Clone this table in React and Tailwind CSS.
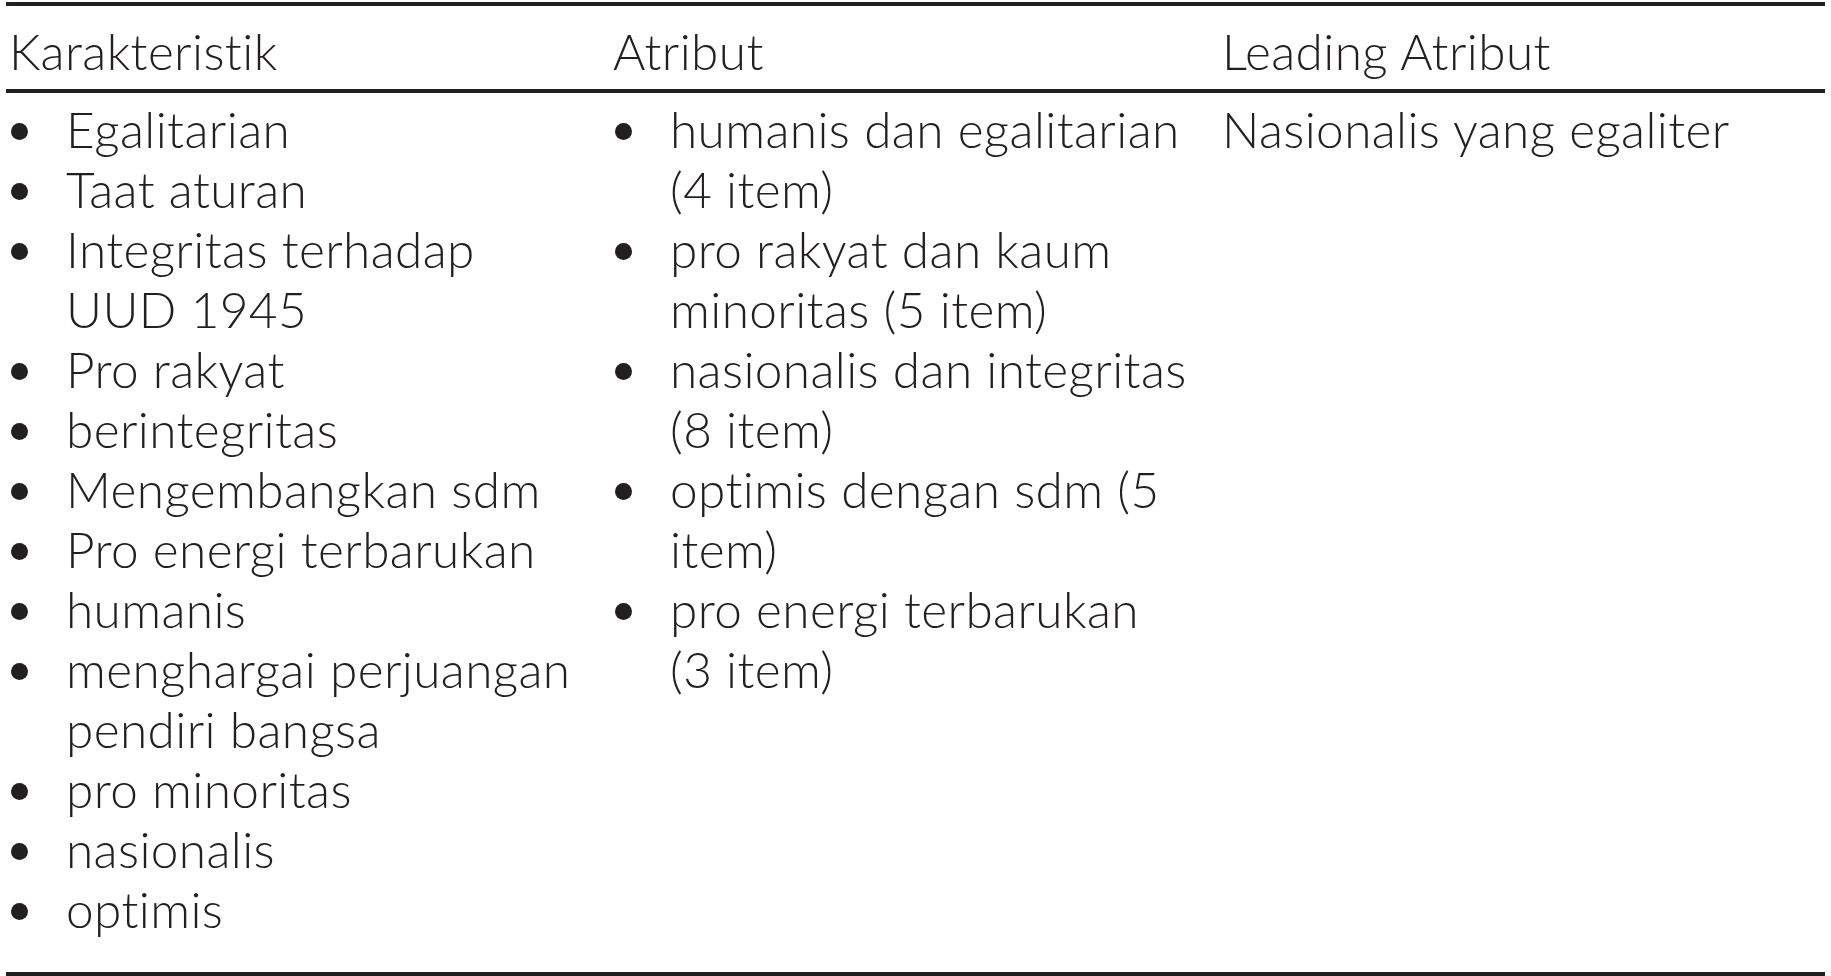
const col1 = [
  ['Egalitarian'],
  ['Taat aturan'],
  ['Integritas terhadap', 'UUD 1945'],
  ['Pro rakyat'],
  ['berintegritas'],
  ['Mengembangkan sdm'],
  ['Pro energi terbarukan'],
  ['humanis'],
  ['menghargai perjuangan', 'pendiri bangsa'],
  ['pro minoritas'],
  ['nasionalis'],
  ['optimis'],
]

const col2 = [
  ['humanis dan egalitarian', '(4 item)'],
  ['pro rakyat dan kaum', 'minoritas (5 item)'],
  ['nasionalis dan integritas', '(8 item)'],
  ['optimis dengan sdm (5', 'item)'],
  ['pro energi terbarukan', '(3 item)'],
]

function Bullets({ items }) {
  return (
    <ul>
      {items.map((lines, i) => (
        <li key={i} className="flex">
          <span className="w-[57px] shrink-0 pl-[2px] pt-[24px]">
            <span className="block w-[17px] h-[17px] rounded-full bg-[#231f20]" />
          </span>
          <span>
            {lines.map((l, j) => (
              <span key={j} className="block whitespace-nowrap">{l}</span>
            ))}
          </span>
        </li>
      ))}
    </ul>
  )
}

export default function App() {
  return (
    <div className="w-[1831px] h-[976px] bg-white pt-[2px] px-[6px] text-[#231f20] text-[49.5px] leading-[60px] tracking-[0.4px] [font-variant-ligatures:none] font-light font-['Lato',sans-serif]">
      <div className="border-t-4 border-b-4 border-[#231f20]">
        {/* Header */}
        <div className="grid grid-cols-[604px_609px_1fr] pt-[15px] pb-[8px] pl-[3px] border-b-4 border-[#231f20]">
          <div>Karakteristik</div>
          <div>Atribut</div>
          <div>Leading Atribut</div>
        </div>

        {/* Body */}
        <div className="grid grid-cols-[604px_609px_1fr] pt-[6px] pb-[33px] pl-[3px]">
          <Bullets items={col1} />
          <Bullets items={col2} />
          <div>Nasionalis yang egaliter</div>
        </div>
      </div>
    </div>
  )
}
